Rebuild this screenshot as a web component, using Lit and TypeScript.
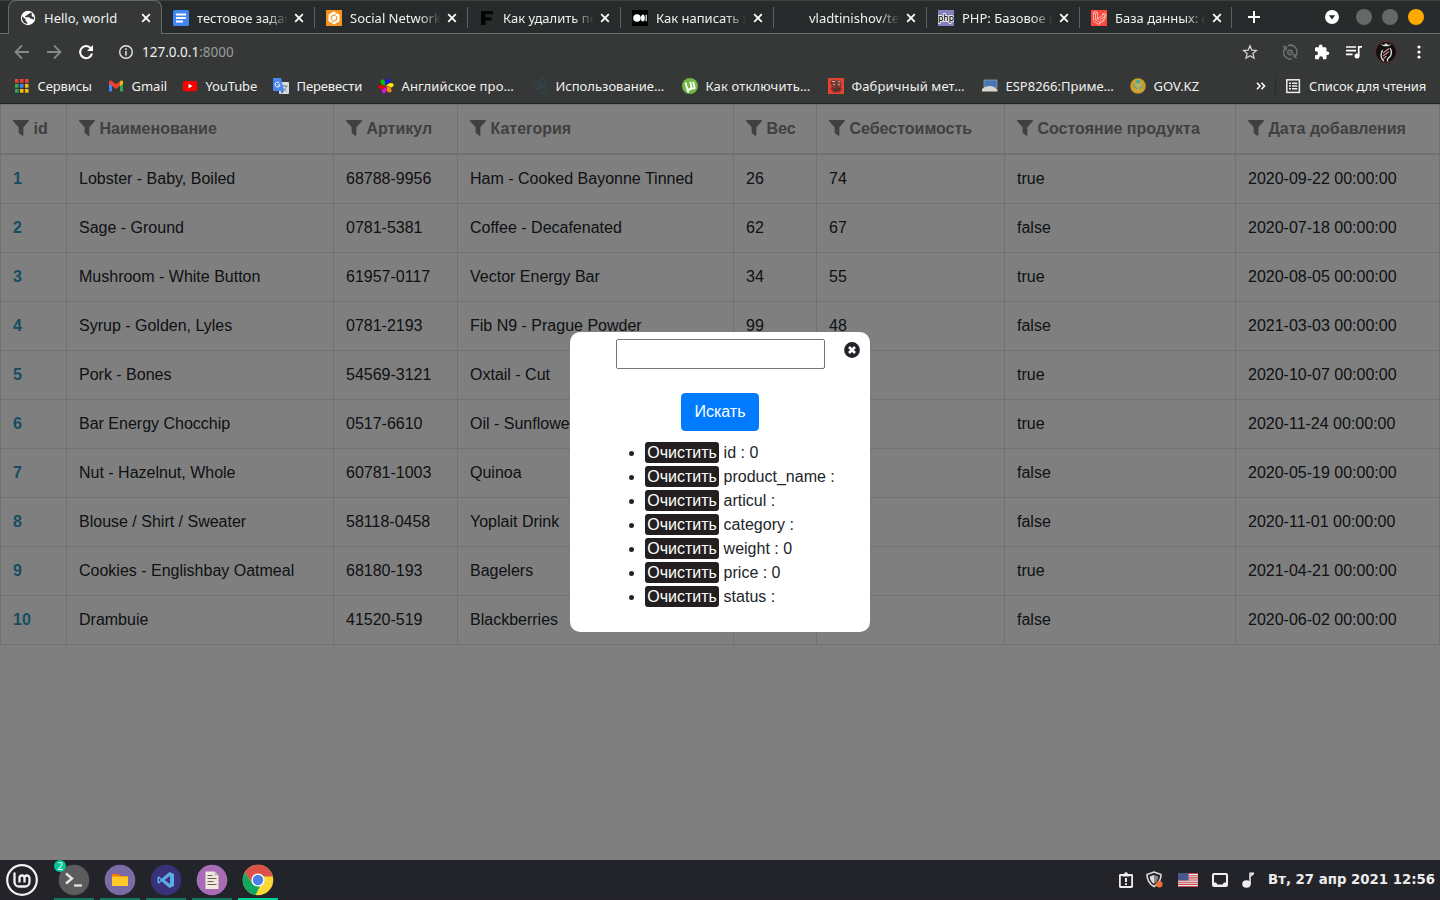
import { LitElement, html, css, svg } from "lit";
import { customElement } from "lit/decorators.js";

const X = html`<svg class="x" width="10" height="10" viewBox="0 0 10 10"><path d="M1.2 1.2 8.8 8.8M8.8 1.2 1.2 8.8" stroke="#fff" stroke-width="1.800"/></svg>`;
const ic = (body: unknown, s = 16) => html`<svg width=${s} height=${s} viewBox="0 0 ${s} ${s}">${body}</svg>`;

const globe = svg`<circle cx="8" cy="8" r="7.2" fill="#fff"/><path d="M2.2 6.6 5.6 9.200V11l1.600 1.200v1.700A6 6 0 0 1 2 8ZM10 2.400c-.2 1.200-.8 1.500-1.600 1.600L7 5.200 5.200 6v1.200h4l1.500 1.600h1.500L13.600 10A6 6 0 0 0 14 7l-2-.6-.6-1.600 1-.9A6 6 0 0 0 10 2.400Z" fill="#353837"/>`;
const docs = svg`<rect width="16" height="16" rx="1.500" fill="#4285f4"/><path d="M3 4.500h10M3 8h10M3 11.500h7" stroke="#fff" stroke-width="1.800"/>`;
const social = svg`<rect width="16" height="16" fill="#f7941e"/><path d="M8 1.500 13.500 4.700v6.500L8 14.400 2.500 11.200V4.700Z" fill="#fff"/><path d="M8 5 10.700 6.500v3L8 11 5.300 9.500v-3ZM8 5 11 3M10.700 6.500v4M10.700 9.500 7.500 11.500M8 11 5 13M5.300 9.500v-4M5.300 6.500 8.500 4.500" stroke="#f7941e" fill="none" stroke-width=".8"/>`;
const effe = svg`<path d="M2 1h12v3.300H6.500v2.900h6v3.200h-6V15H2Z" fill="#050505"/>`;
const medium = svg`<rect width="16" height="16" rx="1" fill="#000"/><circle cx="5" cy="8" r="3.800" fill="#fff"/><ellipse cx="10.900" cy="8" rx="1.900" ry="3.500" fill="#fff"/><path d="M14.200 4.800v6.400" stroke="#fff" stroke-width="1.200"/>`;
const octo = svg`<path d="M8 .8a7.200 7.200 0 0 0-2.300 14v-2.300c-2 .4-2.400-.9-2.400-.9M8 .8a7.200 7.200 0 0 1 2.300 14v-2.700M5 9.500C3.500 8 4 6 4.300 5.500V3.800L6 4.800h4l1.700-1v1.700c.5.600.7 3-.7 4" fill="none" stroke="#24292e" stroke-width="1.200"/>`;
const php = svg`<rect width="16" height="16" fill="#8182bb"/><text x="8" y="11" text-anchor="middle" font-family="Noto Sans" font-size="8.500" font-weight="500" fill="#000" stroke="#fff" stroke-width="1.600" paint-order="stroke">php</text>`;
const laravel = svg`<rect width="16" height="16" fill="#fa4a3d"/><path d="M2.500 2.500 4.500 1.500l2 1v6l5-2.800V4l2-1 1.500 1v3l-2 1v3l-5.500 3.200-5-3ZM2.500 2.500l2 1v6.500l4 2.200M4.500 3.500l2-1M4.500 10l2-1.500M11.500 4l2 1 1.500-1M13.500 5v3l-2-1.200M8.500 12.200l5-3M8.500 12v2.500M6.500 8.500l2 1 5-2.500" fill="none" stroke="#ffd5d0" stroke-width=".7"/>`;

const tabs: [unknown, string][] = [
  [globe, "Hello, world"], [docs, "тестовое задание"], [social, "Social Network A"],
  [effe, "Как удалить пол"], [medium, "Как написать хо"], [octo, "vladtinishov/test"],
  [php, "PHP: Базовое ис"], [laravel, "База данных: сб"],
];

const colors = ["#ea4335", "#ea4335", "#ea4335", "#34a853", "#4285f4", "#fbbc04", "#34a853", "#fbbc04", "#fbbc04"];
const apps = svg`${colors.map((c, i) => svg`<rect x=${1 + (i % 3) * 5} y=${1 + Math.floor(i / 3) * 5} width="3.500" height="3.700" fill=${c}/>`)}`;
const gmail = svg`<path d="M1 4v9.500h3V7Z" fill="#4285f4"/><path d="M12 7v6.500h3V4Z" fill="#34a853"/><path d="M12 4.500V8l3-2.300V4c0-1.500-1.500-2-2.500-1.200Z" fill="#fbbc04"/><path d="M1 4c0-1.500 1.500-2 2.500-1.200L8 6.200l4-3V8l-4 3-4-3-3-2.300Z" fill="#ea4335"/>`;
const yt = svg`<rect x=".8" y="3" width="14.400" height="10.300" rx="2.500" fill="#f00"/><path d="m6.500 5.800 4 2.300-4 2.300Z" fill="#fff"/>`;
const trans = svg`<rect x="6" y="4" width="10" height="12" rx="1" fill="#dadce0"/><path d="M8.500 8h6M11.500 7v1M13.500 8c-.5 2.500-2 4-3.500 5M9.800 9.500c.7 1.500 2 3 3.700 3.700" stroke="#607d8b" fill="none" stroke-width=".9"/><path d="M1 0h7l3 13H1a1 1 0 0 1-1-1V1a1 1 0 0 1 1-1Z" fill="#4a88ee"/><path d="m8 13 3 0-2.500 3Z" fill="#3367d6"/><path d="M6.400 5A2.400 2.400 0 1 0 7 7H4.800" fill="none" stroke="#fff"/>`;
const flower = svg`${["#1414ff", "#ffe600", "#ff8c00", "#d814d8", "#e00", "#00c800"].map((c, i) => svg`<path transform="rotate(${15 + i * 60} 8 8)" d="M8 8C6 6 5.200 2 8 .3c3.300-.2 3.800 4 1 5C8.300 5.800 8 6.500 8 8Z" fill=${c}/>`)}`;
const hex = svg`<g fill="none" stroke="#2f4a58" stroke-width="1.100"><path d="M3 5.300h3l1.500 2.700L6 10.700H3L1.500 8ZM9.500 1h3.300L14.500 4l-1.700 3H9.500L8 4ZM9.500 9h3.300l1.700 3-1.700 3H9.500L8 12Z"/></g>`;
const utor = svg`<circle cx="8" cy="8" r="8" fill="#6fb843"/><path d="M3.500 4.500 5 10q1 2.300 3.300 1.300Q10 10.500 9 7L8.300 3.800M9.500 9.500q1.300 2 3.200.4L11.200 3.800M5 10l1.400 4.500" stroke="#fff" stroke-width="1.900" fill="none"/>`;
const fab = svg`<rect width="16" height="16" fill="#e8432f"/><path d="M2.500 3 6 1.500l3 1L12.500 2l1.500 3-1 3 1 4-3 2.500H5L2.500 11 4 8 2 5Z" fill="#7d3a34"/><path d="M4 3.500h3M10 3.500l2.500.5M5 6l2 1M10 6l2 1" stroke="#c9b0aa" fill="none"/><path d="M5 10l2 3M9 9l-1 4M12 10l-2 3" stroke="#3f1a18" fill="none"/>`;
const esp = svg`<rect x="2" y="2" width="13" height="8" fill="#4976ae" stroke="#8ba7c7" stroke-width=".7"/><path d="M0 13.500V11l3-2q5-2 9 0l3.500 2.500v2Z" fill="#d8d5cf"/>`;
const gov = svg`<circle cx="8" cy="8" r="7.800" fill="#c89b2c"/><circle cx="8" cy="7.500" r="4" fill="#66a68b"/><path d="M8 1v12M4 3l2 4M12 3l-2 4M3 11q5 4 10 0M4.500 7.500h7M5.500 4.500l5 6M10.500 4.500l-5 6" stroke="#e0b84b" fill="none" stroke-width=".8"/><path d="M6 2h4L9 5H7Z" fill="#3bb3a1"/>`;

const marks: [unknown, string, number, string][] = [
  [apps, "Сервисы", 94, "tight"], [gmail, "Gmail", 74, ""], [yt, "YouTube", 91, "tight"], [trans, "Перевести", 105, "tight"], [flower, "Английское про…", 154, "loose"],
  [hex, "Использование…", 150, ""], [utor, "Как отключить…", 146, "loose"], [fab, "Фабричный мет…", 154, "loose"], [esp, "ESP8266:Приме…", 148, ""], [gov, "GOV.KZ", 90, ""],
];

const heads = ["id", "Наименование", "Артикул", "Категория", "Вес", "Себестоимость", "Состояние продукта", "Дата добавления"];
const widths = [66, 267, 124, 276, 83, 188, 231, 204];
const rows = [
  ["1", "Lobster - Baby, Boiled", "68788-9956", "Ham - Cooked Bayonne Tinned", "26", "74", "true", "2020-09-22 00:00:00"],
  ["2", "Sage - Ground", "0781-5381", "Coffee - Decafenated", "62", "67", "false", "2020-07-18 00:00:00"],
  ["3", "Mushroom - White Button", "61957-0117", "Vector Energy Bar", "34", "55", "true", "2020-08-05 00:00:00"],
  ["4", "Syrup - Golden, Lyles", "0781-2193", "Fib N9 - Prague Powder", "99", "48", "false", "2021-03-03 00:00:00"],
  ["5", "Pork - Bones", "54569-3121", "Oxtail - Cut", "", "", "true", "2020-10-07 00:00:00"],
  ["6", "Bar Energy Chocchip", "0517-6610", "Oil - Sunflower", "", "", "true", "2020-11-24 00:00:00"],
  ["7", "Nut - Hazelnut, Whole", "60781-1003", "Quinoa", "", "", "false", "2020-05-19 00:00:00"],
  ["8", "Blouse / Shirt / Sweater", "58118-0458", "Yoplait Drink", "", "", "false", "2020-11-01 00:00:00"],
  ["9", "Cookies - Englishbay Oatmeal", "68180-193", "Bagelers", "", "", "true", "2021-04-21 00:00:00"],
  ["10", "Drambuie", "41520-519", "Blackberries", "", "", "false", "2020-06-02 00:00:00"],
];
const filters = ["id : 0", "product_name :", "articul :", "category :", "weight : 0", "price : 0", "status :"];
const funnel = html`<svg class="funnel" width="16" height="16" viewBox="0 0 16 16"><path fill="currentColor" d="M.6 0h14.800q.9.400.4 1.200L10.400 7.300V15.300q-.4.800-1.100.5L6 13.300Q5.600 13 5.600 12.500V7.300L.2 1.200Q-.3.400.6 0Z"/></svg>`;

const dock = [
  svg`<circle cx="16" cy="16" r="15.300" fill="#5c5c5c"/><path d="m8 9.500 6 5-6 5" stroke="#e8e8e8" stroke-width="2.300" fill="none"/><path d="M16 21.500h8" stroke="#e8e8e8" stroke-width="2.200"/>`,
  svg`<circle cx="16" cy="16" r="15.300" fill="#7b6ba5"/><path d="M8 10h6.500l1.500 2h8v4H8Z" fill="#f57c00"/><rect x="8" y="12.500" width="16" height="9.500" rx=".5" fill="#ffca28"/>`,
  svg`<circle cx="16" cy="16" r="15.300" fill="#3b3178"/><path fill-rule="evenodd" d="M19.500 8 24 10v12l-4.500 2-8-6.700L9 19.700l-1.500-.8v-5.800L9 12.300l2.500 2.400ZM20 12l-5.300 4 5.300 4ZM9 14.300v3.400l1.700-1.700Z" fill="#5aaee5"/>`,
  svg`<circle cx="16" cy="16" r="15.300" fill="#a86bb5"/><path d="M9.500 7.500h9l4 4V25h-13Z" fill="#f1eadb"/><path d="M18.500 7.500v4h4Z" fill="#cbbdac"/><path d="M11.500 11.500h5M11.500 14.500h9M11.500 17.500h6M11.500 20.500h9" stroke="#6c5a63" stroke-width="1.200"/>`,
  svg`<circle cx="16" cy="16" r="15.300" fill="#fdd835"/><path d="M2.700 8.400A15.300 15.300 0 0 1 30.900 12.500H16L10 19Z" fill="#d9534a"/><path d="M2.700 8.400A15.300 15.300 0 0 0 13.500 31.100L19 20 10 19Z" fill="#0fa860"/><circle cx="16" cy="16" r="6.600" fill="#fff"/><circle cx="16" cy="16" r="5.200" fill="#4a80e8"/>`,
];

@customElement("app-root")
export class AppRoot extends LitElement {
  static styles = css`
    :host { display: flex; flex-direction: column; width: 1440px; height: 900px; overflow: hidden; font-family: "Liberation Sans", Arial, sans-serif; }
    * { box-sizing: border-box; }
    svg { display: block; flex: none; }
    .chrome { height: 104px; background: #353837; color: #f1f1f0; font: 13px/16px "Noto Sans", sans-serif; border-bottom: 1px solid #202424; flex: none; }
    .tabs { height: 34px; background: #272b2c; display: flex; padding-left: 8px; border-top: 1px solid #3c403f; border-bottom: 1px solid #686b6a; }
    .tab { width: 153px; height: 33px; display: flex; align-items: center; padding: 0 11px 0 12px; position: relative; flex: none; }
    .tab.active { background: #353837; border: 1px solid #686b6a; border-bottom: 0; border-radius: 8px 8px 0 0; margin-top: -1px; height: 34px; width: 154px; padding: 1px 11px 0 11px; margin-right: -1px; }
    .tab:not(.active)::after { content: ""; position: absolute; right: -1px; top: 6px; width: 1px; height: 21px; background: #5b5f5f; }
    .tab:last-of-type { width: 152px; }
    .tab .name { margin-left: 8px; width: 91px; overflow: hidden; white-space: nowrap; flex: none; }
    .tab:not(.active) .name { mask-image: linear-gradient(90deg, #000 70px, transparent 91px); }
    .x { margin-left: 6px; }
    .plus { margin: 10px 0 0 17px; }
    .winbtns { margin-left: auto; display: flex; align-items: center; padding-right: 16px; }
    .dot { width: 16px; height: 16px; border-radius: 50%; background: #656867; margin-left: 10px; }
    .dot.close { background: #ffa800; }
    .winbtns svg { margin-right: 7px; }
    .bar { height: 36px; display: flex; align-items: center; padding: 0 11px 0 14px; }
    .bar .info { margin-left: 24px; }
    .url { margin-left: 8px; font-size: 13.500px; }
    .port { color: #9a9c9b; }
    .bar svg + svg { margin-left: 16px; }
    .right { margin-left: auto; display: flex; align-items: center; }
    .bar .right .sync { margin-left: 24px; }
    .bar .right .face { margin-left: 13px; }
    .bar .right .more { margin: 0 8px 0 20px; }
    .marks { height: 31px; display: flex; align-items: center; padding-left: 13.500px; }
    .mark { display: flex; align-items: center; gap: 8px; white-space: nowrap; flex: none; }
    .tight { letter-spacing: -.12px; }
    .loose { letter-spacing: .13px; }
    .reading { margin-left: auto; display: flex; align-items: center; gap: 8px; padding-right: 14px; white-space: nowrap; letter-spacing: -.15px; }
    .sep { width: 1px; height: 16px; background: #262a2a; margin: 0 1px; }
    .page { height: 756px; flex: none; position: relative; background: #fff; color: #212529; font-size: 16px; line-height: 24px; overflow: hidden; }
    table { border-collapse: collapse; table-layout: fixed; width: 1440px; border: 1px solid #dee2e6; }
    table { width: 1439px; }
    td, th { padding: 12px; border: 1px solid #dee2e6; text-align: left; vertical-align: top; white-space: nowrap; height: 49px; }
    thead th { border-bottom-width: 2px; color: #808080; }
    .funnel { display: inline-block; vertical-align: -2px; margin-right: 4.450px; }
    .id { color: #2f9ac4; font-weight: 700; }
    .shade { position: absolute; inset: 0; background: rgba(0, 0, 0, .5); }
    .modal { position: absolute; left: 570px; top: 228px; width: 300px; height: 300px; background: #fff; border-radius: 10px; display: flex; flex-direction: column; align-items: center; padding-top: 7px; }
    .field { width: 209px; height: 30px; border: 1px solid #767676; border-radius: 2px; background: #fff; padding: 1px 2px; font: inherit; }
    .btn { margin-top: 24px; height: 38px; width: 78px; border: 1px solid #007bff; border-radius: 4px; background: #007bff; color: #fff; font: inherit; padding: 0; }
    .list { margin: 10px 0 0; padding: 0 0 0 40px; width: 230px; }
    .clear { background: #231f20; color: #fff; border-radius: 3px; padding: 2px 2.300px 2px 2.200px; }
    .shut { position: absolute; right: 10px; top: 10px; }
    .panel { height: 40px; flex: none; background: #22242a; display: flex; align-items: center; padding-left: 6px; border-bottom: 1px solid #271f29; }
    .app { width: 40px; height: 40px; display: flex; flex-direction: column; align-items: center; padding-top: 4px; border-bottom: 2px solid #14765b; margin-right: 6px; position: relative; }
    .app.first { margin-left: 16px; }
    .app.now { border-color: #00d19a; }
    .badge { position: absolute; left: 0; top: 0; width: 12px; height: 12px; border-radius: 50%; background: #00c795; color: #fff; font: 10px/12px "Noto Sans", sans-serif; text-align: center; }
    .tray { margin-left: auto; display: flex; align-items: center; gap: 14px; padding-right: 5px; color: #ececec; font: bold 13.300px/16px "DejaVu Sans", sans-serif; white-space: nowrap; }
    .tray .shield { margin: 0 1px 0 -2px; }
  `;

  render() {
    return html`
      <div class="chrome">
        <div class="tabs">
          ${tabs.map(([i, t], n) => html`<section class="tab ${n === 0 ? "active" : ""}">${ic(i)}<span class="name">${t}</span>${X}</section>`)}
          <svg class="plus" width="12" height="12" viewBox="0 0 12 12"><path d="M6 0v12M0 6h12" stroke="#fff" stroke-width="2"/></svg>
          <div class="winbtns">
            <svg width="14" height="14" viewBox="0 0 14 14"><circle cx="7" cy="7" r="7" fill="#fff"/><path d="M3.800 5.300h6.400L7 9.500Z" fill="#272b2c"/></svg>
            <i class="dot"></i><i class="dot"></i><i class="dot close"></i>
          </div>
        </div>
        <div class="bar">
          ${ic(svg`<path d="M15 8H2M8 1.500 1.500 8 8 14.500" fill="none" stroke="#878988" stroke-width="1.800"/>`)}
          ${ic(svg`<path d="M1 8h13M8 1.500 14.500 8 8 14.500" fill="none" stroke="#878988" stroke-width="1.800"/>`)}
          ${ic(svg`<path d="M12.800 4.300A6 6 0 1 0 14 9.500" fill="none" stroke="#fff" stroke-width="2"/><path d="M15 1v6H9Z" fill="#fff"/>`)}
          <svg class="info" width="16" height="16" viewBox="0 0 16 16"><circle cx="8" cy="8" r="6.300" fill="none" stroke="#e6e6e6" stroke-width="1.400"/><path d="M8 7v4.500M8 4.300v1.600" stroke="#e6e6e6" stroke-width="1.500"/></svg>
          <span class="url">127.0.0.1<span class="port">:8000</span></span>
          <div class="right">
            ${ic(svg`<path d="m8 1.800 1.800 4.300 4.700.4-3.600 3.100 1.100 4.600L8 11.700l-4 2.500 1.100-4.600L1.500 6.500l4.700-.4Z" fill="none" stroke="#d0d1d0" stroke-width="1.300"/>`)}
            <svg class="sync" width="16" height="16" viewBox="0 0 16 16"><g fill="none" stroke="#747776" stroke-width="1.300"><circle cx="8" cy="8.500" r="2.300"/><path d="M6 14.500A6.500 6.500 0 0 1 3.500 3.800M6 1.500A6.700 6.700 0 0 1 13 12.500M1 2.500 4.500 3 4 6.500M15 14l-3-1.500.3-3M6 1.500h4M6 15h3.500"/></g><circle cx="8" cy="8.500" r=".8" fill="#747776"/></svg>
            ${ic(svg`<path d="M13.500 7.500h-1V4.700c0-.8-.6-1.400-1.400-1.400H8.500v-1a1.800 1.800 0 0 0-3.600 0v1H2.200C1.500 3.300 1 3.900 1 4.700v2.600h1a2 2 0 0 1 0 4H1v2.600c0 .8.600 1.400 1.300 1.400H5v-1a2 2 0 0 1 4 0v1h2.200c.8 0 1.300-.6 1.300-1.400v-2.800h1a1.800 1.800 0 0 0 0-3.600Z" fill="#fff"/>`)}
            ${ic(svg`<path d="M0 3h10M0 6.700h10M0 10.400h6.500M12.700 12V2.800H16" stroke="#fff" stroke-width="1.700" fill="none"/><circle cx="11" cy="12" r="2.500" fill="#fff"/>`)}
            <svg class="face" width="22" height="22" viewBox="0 0 22 22"><circle cx="11" cy="11" r="10.500" fill="#101010" stroke="#7b2626" stroke-width=".7"/><path d="M5.500 3 9 4l2-2 2 2 3.500-1-3 2.300h-5Z" fill="#ddd"/><path d="M7.500 9q-2.500 5-.5 9l2 2M15 7q2.500 4 .5 8l-3 3v2.500" fill="none" stroke="#e4e4e4" stroke-width="1.300"/><path d="m8 12 6-4.500M8 15l6-4.500M8.500 17.500l3-2.500" stroke="#d88d8a" stroke-width="1.200"/></svg>
            <svg class="more" width="4" height="16" viewBox="0 0 4 16"><g fill="#fff"><circle cx="2" cy="3" r="1.600"/><circle cx="2" cy="8" r="1.600"/><circle cx="2" cy="13" r="1.600"/></g></svg>
          </div>
        </div>
        <div class="marks">
          ${marks.map(([i, t, w, k]) => html`<div class="mark" style="width:${w}px">${ic(i)}<span class=${k}>${t}</span></div>`)}
          <div class="reading">
            <svg width="10" height="8" viewBox="0 0 10 8"><path d="m1 .8 3 3.200-3 3.200M5.500.8l3 3.200-3 3.200" fill="none" stroke="#fff" stroke-width="1.600"/></svg>
            <i class="sep"></i>
            ${ic(svg`<rect x="1.800" y="1.800" width="12.600" height="12.600" fill="none" stroke="#eee" stroke-width="1.500"/><path d="M4 5.300h2M4 8h2M4 10.700h2M7 5.300h5.300M7 8h5.300M7 10.700h5.300" stroke="#eee" stroke-width="1.500"/>`)}
            <span>Список для чтения</span>
          </div>
        </div>
      </div>
      <div class="page">
        <table>
          <colgroup>${widths.map((w) => html`<col style="width:${w}px">`)}</colgroup>
          <thead><tr>${heads.map((h) => html`<th>${funnel}${h}</th>`)}</tr></thead>
          <tbody>${rows.map((r) => html`<tr>${r.map((c, i) => html`<td class=${i === 0 ? "id" : ""}>${c}</td>`)}</tr>`)}</tbody>
        </table>
        <div class="shade"></div>
        <div class="modal">
          <input class="field">
          <button class="btn">Искать</button>
          <ul class="list">${filters.map((f) => html`<li><span class="clear">Очистить</span> ${f}</li>`)}</ul>
          <svg class="shut" width="16" height="16" viewBox="0 0 16 16"><circle cx="8" cy="8" r="7.900" fill="#212529"/><path d="m5 5 6 6M11 5l-6 6" stroke="#fff" stroke-width="2.600"/></svg>
        </div>
      </div>
      <div class="panel">
        <svg width="32" height="32" viewBox="0 0 32 32"><circle cx="16" cy="16" r="14.800" fill="none" stroke="#f2f2f2" stroke-width="2.200"/><path d="M8.500 8.500v9.500a4.500 4.500 0 0 0 4.500 4.500h6a4.500 4.500 0 0 0 4.500-4.500v-4a2.500 2.500 0 0 0-5 0v4.500M18.500 14a2.500 2.500 0 0 0-5 0v4.500" fill="none" stroke="#f2f2f2" stroke-width="2.300"/></svg>
        ${dock.map((d, i) => html`<div class="app ${i === 0 ? "first" : ""} ${i === 4 ? "now" : ""}">${ic(d, 32)}${i === 0 ? html`<span class="badge">2</span>` : ""}</div>`)}
        <div class="tray">
          ${ic(svg`<rect x="1.900" y="3" width="12.200" height="12" rx=".5" fill="none" stroke="#eee" stroke-width="1.800"/><path d="M4.500 4.500V2.300H6a2 2 0 0 1 4 0h1.500v2.200Z" fill="#eee"/><path d="M8 6v4M8 11.300v1.700" stroke="#eee" stroke-width="2"/>`)}
          <svg class="shield" width="17" height="17" viewBox="0 0 17 17"><path d="M8 1 15 3.500q0 8-7 12-7-4-7-12Z" fill="none" stroke="#ddd" stroke-width="1.600"/><path d="M8 4v9q-4-3-4.300-7.500Z" fill="#ddd"/><path d="M8 4v9q4-3 4.300-7.500Z" fill="#888"/><circle cx="13.300" cy="13.300" r="3.200" fill="#f0703a"/></svg>
          <svg width="20" height="14" viewBox="0 0 20 14"><rect width="20" height="14" fill="#eee"/><path d="M0 .5h20M0 2.700h20M0 4.900h20M0 7h20M0 9.200h20M0 11.400h20M0 13.500h20" stroke="#c8414b" stroke-width="1.100"/><rect width="10.500" height="7.500" fill="#46588c"/></svg>
          <svg width="16" height="14" viewBox="0 0 16 14"><rect x="1" y="1" width="14" height="12" rx="1" fill="none" stroke="#eee" stroke-width="2"/><path d="M1 9.500h3l1.500 2h5l1.500-2h3V13H1Z" fill="#eee"/></svg>
          <svg width="12" height="16" viewBox="0 0 12 16"><ellipse cx="4.500" cy="12" rx="4.300" ry="3.700" fill="#eee"/><path d="M8 12V1M7.500 1.200H12L8 4.500" stroke="#eee" stroke-width="1.500" fill="none"/></svg>
          <span>Вт, 27 апр 2021 12:56</span>
        </div>
      </div>`;
  }
}
